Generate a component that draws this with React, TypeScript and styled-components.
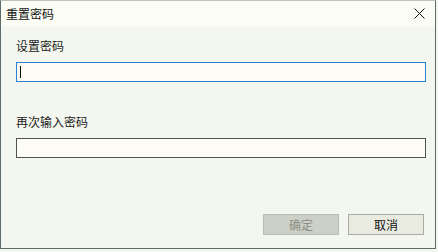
import React from "react";
import styled, { createGlobalStyle } from "styled-components";

const Global = createGlobalStyle`
  html, body { margin: 0; padding: 0; background: #f4f7f0; }
  body { font-family: "Noto Sans CJK SC", "Microsoft YaHei", sans-serif; }
  * { box-sizing: border-box; }
`;

const Window = styled.div`
  width: 436px;
  height: 249px;
  display: flex;
  flex-direction: column;
  border: 1px solid #5d6c6a;
  border-top-color: #b9c2bf;
  background: #f4f7ef;
`;

const TitleBar = styled.div`
  height: 25px;
  display: flex;
  align-items: center;
  justify-content: space-between;
  padding: 0 9px 0 5px;
  background: #fbfcf4;
`;

const Title = styled.span`
  font-size: 12px;
  line-height: 16px;
  color: #111;
`;

const CloseButton = styled.div`
  width: 14px;
  height: 14px;
  display: flex;
  align-items: center;
  justify-content: center;
`;

const Body = styled.div`
  flex: 1;
  display: flex;
  flex-direction: column;
  padding: 12px 9px 13px 15px;
`;

const Label = styled.div<{ $mt?: number }>`
  font-size: 12px;
  line-height: 16px;
  color: #1a1a1a;
  margin-top: ${(p) => p.$mt ?? 0}px;
  margin-bottom: 8px;
`;

const Input = styled.div<{ $focused?: boolean }>`
  height: 20px;
  width: 410px;
  border: 1px solid ${(p) => (p.$focused ? "#2a7fcf" : "#50554b")};
  background: #fdfdf5;
  display: flex;
  align-items: center;
  padding-left: 3px;
`;

const Caret = styled.div`
  width: 1px;
  height: 12px;
  background: #000;
`;

const Footer = styled.div`
  margin-top: auto;
  display: flex;
  justify-content: flex-end;
  gap: 9px;
  padding-right: 2px;
`;

const Button = styled.div<{ $disabled?: boolean }>`
  width: 76px;
  height: 21px;
  display: flex;
  align-items: center;
  justify-content: center;
  font-size: 12px;
  border: 1px solid ${(p) => (p.$disabled ? "#b9bcb1" : "#a9aca2")};
  background: ${(p) => (p.$disabled ? "#cdd0c6" : "#e9ebe1")};
  color: ${(p) => (p.$disabled ? "#8b8e85" : "#111")};
`;

export default function App() {
  return (
    <>
      <Global />
      <Window>
        <TitleBar>
          <Title>重置密码</Title>
          <CloseButton>
            <svg width="11" height="11" viewBox="0 0 11 11">
              <path d="M0.5 0.5 L10.5 10.5 M10.5 0.5 L0.5 10.5" stroke="#111" strokeWidth="1" />
            </svg>
          </CloseButton>
        </TitleBar>
        <Body>
          <Label>设置密码</Label>
          <Input $focused>
            <Caret />
          </Input>
          <Label $mt={32}>再次输入密码</Label>
          <Input />
          <Footer>
            <Button $disabled>确定</Button>
            <Button>取消</Button>
          </Footer>
        </Body>
      </Window>
    </>
  );
}
